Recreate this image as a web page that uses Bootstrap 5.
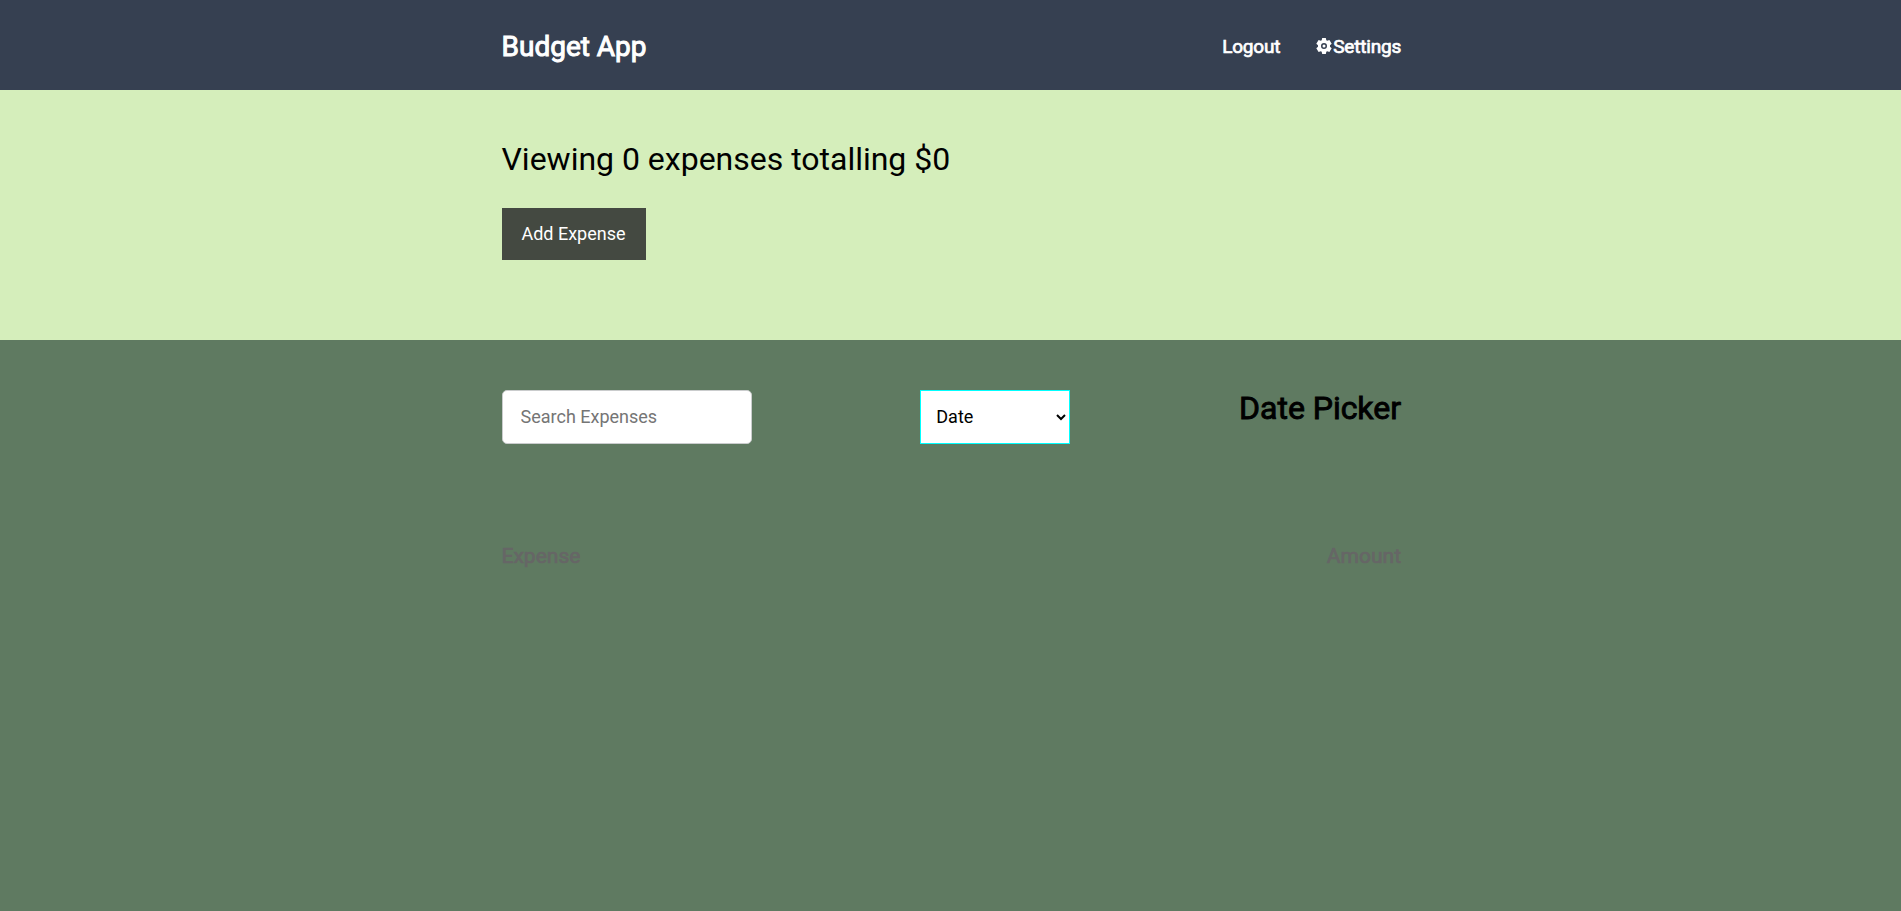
<!DOCTYPE html>
<html lang="en">
<head>
<meta charset="utf-8">
<meta name="viewport" content="width=device-width, initial-scale=1">
<title>Budget App</title>
<link href="https://cdn.jsdelivr.net/npm/bootstrap@5.3.0/dist/css/bootstrap.min.css" rel="stylesheet">
<style>
body{font-family:Roboto,sans-serif;font-size:18px;line-height:1.6;color:#000;background:#5f7a61}
.wrap{width:899.5px;margin-left:501.5px}
.top-bar{height:90px;padding-top:3px;background:#364051;color:#fff}
.top-bar a{color:inherit}
.heavy{font-weight:400;-webkit-text-stroke:.7px currentColor}
.brand{font-size:28px;line-height:1.2;-webkit-text-stroke-width:1px}
.menu-link{font-size:19px;line-height:1.6;gap:36px;letter-spacing:-.2px;padding-top:1px}
.gear{width:16px;height:16px;margin:0 1px 2px 0;flex:none}
.summary{height:250px;padding-top:50px;background:#d5eebb}
.summary-title{font-size:32px;line-height:38px;margin-bottom:30px;font-weight:400;letter-spacing:-.01px}
.add-btn{width:144px;height:52px;padding:0 0 2px;font-size:18px;color:#fff;background:#444941;--bs-btn-border-width:0}
.filters{padding-top:2px}
.search{width:250px;height:54px;padding:0 17px 1px 18px;font-size:18px;color:#000;border:1px solid #cacccd;border-radius:5px}
.search::placeholder{color:#757575}
.sorter{width:150px;height:54px;padding:0 11px 1px;font-size:18px;color:#000;background:#fff;border:1px solid #0ff;border-radius:0}
.picker{font-size:32px;line-height:36px;-webkit-text-stroke-width:.9px;letter-spacing:-.03px}
.heads{margin-top:98px;font-size:21px;line-height:28px;color:#666}
</style>
<script src="https://cdn.jsdelivr.net/npm/bootstrap@5.3.0/dist/js/bootstrap.bundle.min.js"></script>
</head>
<body>
<header class="top-bar">
  <div class="wrap h-100 d-flex justify-content-between align-items-center">
    <a href="#" class="brand heavy text-decoration-none">Budget App</a>
    <nav class="menu-link heavy d-flex">
      <a href="#" class="text-decoration-none">Logout</a>
      <a href="#" class="text-decoration-none d-flex align-items-center"><svg class="gear" viewBox="0 0 16 16" aria-hidden="true"><path fill="#fff" fill-rule="evenodd" d="M6.200 0h3.600l.5 2.200.9.500 2.200-.7 2.300 3.800L14 7.200v1.600l1.700 1.400-2.300 3.800-2.200-.7-.9.500-.5 2.200H6.200l-.5-2.200-.9-.5-2.200.7L.300 10.200 2 8.800V7.200L.300 5.800 2.600 2l2.200.7.9-.5zM8 5a3 3 0 1 0 0 6 3 3 0 0 0 0-6z"/><circle cx="8" cy="8" r="1.500" fill="#fff"/></svg>Settings</a>
    </nav>
  </div>
</header>
<section class="summary">
  <div class="wrap">
    <h1 class="summary-title">Viewing 0 expenses totalling $0</h1>
    <button type="button" class="btn rounded-0 add-btn">Add Expense</button>
  </div>
</section>
<main class="wrap pt-5">
  <div class="d-flex justify-content-between align-items-start filters">
    <input type="text" class="search" placeholder="Search Expenses">
    <select class="sorter"><option>Date</option><option>Amount</option></select>
    <h2 class="picker heavy mb-0">Date Picker</h2>
  </div>
  <div class="heads heavy d-flex justify-content-between">
    <div>Expense</div>
    <div>Amount</div>
  </div>
</main>
</body>
</html>
